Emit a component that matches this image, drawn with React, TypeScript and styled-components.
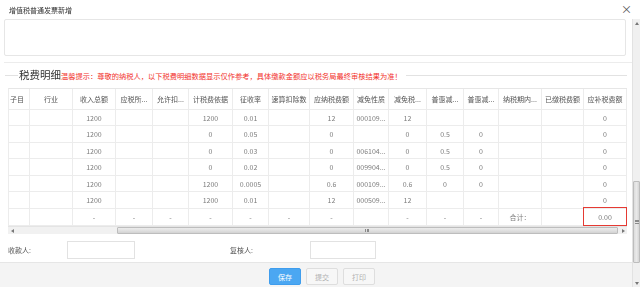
import React from 'react';
import styled, { createGlobalStyle } from 'styled-components';

const Global = createGlobalStyle`
  html, body { margin: 0; padding: 0; background: #fff; }
  body {
    font-family: "Noto Sans CJK SC", "Noto Sans", sans-serif;
    -webkit-font-smoothing: antialiased;
  }
  * { box-sizing: border-box; }
`;

const Window = styled.div`
  width: 640px;
  height: 287px;
  display: flex;
  flex-direction: column;
  overflow: hidden;
  background: #fff;
`;

const TitleBar = styled.div`
  height: 19px;
  flex: none;
  display: flex;
  align-items: center;
  justify-content: space-between;
  padding: 0 8px 0 9px;
`;

const Title = styled.span`
  font-size: 7px;
  color: #333;
  filter: grayscale(1);
`;

const Close = styled.span`
  font-size: 11px;
  line-height: 1;
  color: #555;
`;

const Body = styled.div`
  flex: 1;
  display: flex;
  min-height: 0;
`;

const Content = styled.div`
  flex: 1;
  display: flex;
  flex-direction: column;
  min-width: 0;
`;

const TopBox = styled.div`
  height: 37px;
  margin: 0 6px 0 4px;
  border: 1px solid #e6e6e6;
  border-radius: 2px;
`;

const Divider = styled.div`
  height: 1px;
  margin: 6px 0 0 4px;
  background: #ececec;
`;

const LegendRow = styled.div`
  height: 25px;
  display: flex;
  align-items: center;
  padding: 0 5px;
`;

const LegendLine = styled.div<{ $grow?: boolean }>`
  height: 1px;
  background: #e2e2e2;
  width: 13px;
  flex: ${(p) => (p.$grow ? '1' : 'none')};
  margin: ${(p) => (p.$grow ? '0 0 0 4px' : '0 1px 0 0')};
`;

const Heading = styled.span`
  font-size: 10.5px;
  color: #333;
  line-height: 1;
  filter: grayscale(1);
`;

const Hint = styled.span`
  font-size: 7.25px;
  color: #f2322c;
  line-height: 1;
  margin-top: 2px;
  white-space: nowrap;
`;

const TableWrap = styled.div`
  margin-left: 8px;
  width: 619px;
  position: relative;
`;

const Grid = styled.div<{ $cols: string }>`
  display: grid;
  grid-template-columns: ${(p) => p.$cols};
  grid-template-rows: 21px 16px 17px 16px 17px 16px 17px 17px;
  border-top: 1px solid #e6e6e6;
  border-left: 1px solid #ececec;
`;

const Cell = styled.div<{ $left?: boolean; $mark?: boolean }>`
  position: relative;
  display: flex;
  align-items: center;
  justify-content: ${(p) => (p.$left ? 'flex-start' : 'center')};
  padding: ${(p) => (p.$left ? '0 0 0 1px' : '0 2px')};
  border-right: 1px solid #ececec;
  border-bottom: 1px solid #ececec;
  white-space: nowrap;
  overflow: ${(p) => (p.$mark ? 'visible' : 'hidden')};
  background: #fff;
  &::after {
    content: '';
    display: ${(p) => (p.$mark ? 'block' : 'none')};
    position: absolute;
    left: -1px;
    right: -1px;
    top: -2px;
    bottom: -1px;
    border: 1.5px solid #e53a33;
    z-index: 2;
  }
`;

const CellText = styled.span<{ $head?: boolean }>`
  font-size: 7px;
  color: ${(p) => (p.$head ? '#555' : '#7c7c7c')};
  filter: grayscale(1);
`;

const HScroll = styled.div`
  margin-left: 8px;
  width: 619px;
  height: 8px;
  display: flex;
  background: #f1f1f1;
  border-top: 1px solid #e4e4e4;
`;

const Arrow = styled.div`
  width: 8px;
  flex: none;
  display: flex;
  align-items: center;
  justify-content: center;
`;

const Track = styled.div<{ $vertical?: boolean }>`
  flex: 1;
  display: flex;
  flex-direction: ${(p) => (p.$vertical ? 'column' : 'row')};
`;

const Gap = styled.div<{ $size: number }>`
  flex: ${(p) => p.$size} 1 0;
`;

const Thumb = styled.div<{ $size: number; $vertical?: boolean }>`
  flex: ${(p) => p.$size} 1 0;
  display: flex;
  align-items: center;
  justify-content: center;
  background: ${(p) =>
    p.$vertical
      ? 'linear-gradient(to right, #dcdcdc, #e9e9e9 50%, #d6d6d6)'
      : 'linear-gradient(to bottom, #ececec, #dedede 60%, #d2d2d2)'};
  border: 1px solid #bdbdbd;
  border-radius: 1px;
`;

const Grip = styled.div<{ $vertical?: boolean }>`
  width: 4px;
  height: ${(p) => (p.$vertical ? '4px' : '3px')};
  border-style: solid;
  border-color: #8a8a8a;
  border-width: ${(p) => (p.$vertical ? '1px 0' : '0 1px')};
  position: relative;
  &::before {
    content: '';
    position: absolute;
    background: #8a8a8a;
    ${(p) =>
      p.$vertical
        ? 'left:0; right:0; top:50%; height:1px; margin-top:-0.5px;'
        : 'top:0; bottom:0; left:50%; width:1px; margin-left:-0.5px;'}
  }
`;

const SignRow = styled.div`
  margin-top: 7px;
  height: 18px;
  display: grid;
  grid-template-columns: 59px 68px 95px 80px 66px;
  align-items: center;
  padding-left: 8px;
`;

const Label = styled.span`
  font-size: 7px;
  color: #555;
  filter: grayscale(1);
`;

const Input = styled.div`
  height: 18px;
  border: 1px solid #e2e2e2;
  background: #fff;
`;

const Footer = styled.div`
  margin-top: 3px;
  flex: 1;
  background: #f4f4f4;
  border-top: 1px solid #e6e6e6;
  display: flex;
  align-items: flex-start;
  padding: 5px 0 0 269px;
  gap: 5px;
`;

const Button = styled.button<{ $primary?: boolean }>`
  width: 32px;
  height: 17px;
  padding: 0;
  font-family: inherit;
  font-size: 7px;
  border-radius: 2px;
  border: 1px solid ${(p) => (p.$primary ? '#3f9ded' : '#dedede')};
  background: ${(p) => (p.$primary ? '#4ba7f2' : '#f7f7f7')};
  color: ${(p) => (p.$primary ? '#fff' : '#b0b0b0')};
`;

const VScroll = styled.div`
  width: 8px;
  flex: none;
  display: flex;
  flex-direction: column;
  background: #f0f0f0;
  border-left: 1px solid #e2e2e2;
`;

const VArrow = styled.div`
  height: 8px;
  flex: none;
  display: flex;
  align-items: center;
  justify-content: center;
`;

const Tri = ({ dir }: { dir: 'up' | 'down' | 'left' | 'right' }) => {
  const pts = {
    up: '2,0 4,3 0,3',
    down: '0,0 4,0 2,3',
    left: '3,0 3,4 0,2',
    right: '0,0 3,2 0,4',
  }[dir];
  const w = dir === 'up' || dir === 'down' ? 4 : 3;
  const h = dir === 'up' || dir === 'down' ? 3 : 4;
  return (
    <svg width={w} height={h} viewBox={`0 0 ${w} ${h}`}>
      <polygon points={pts} fill="#777" />
    </svg>
  );
};

const widths = [21, 43, 43, 37, 36, 44, 36, 41, 44, 35, 38, 37, 35, 43, 42, 44];
const headers = [
  '子目', '行业', '收入总额', '应税所...', '允许扣...', '计税费依据', '征收率', '速算扣除数',
  '应纳税费额', '减免性质', '减免税...', '普惠减...', '普惠减...', '纳税期内...', '已缴税费额', '应补税费额',
];
const rows: string[][] = [
  ['', '', '1200', '', '', '1200', '0.01', '', '12', '000109...', '12', '', '', '', '', '0'],
  ['', '', '1200', '', '', '0', '0.05', '', '0', '', '0', '0.5', '0', '', '', '0'],
  ['', '', '1200', '', '', '0', '0.03', '', '0', '006104...', '0', '0.5', '0', '', '', '0'],
  ['', '', '1200', '', '', '0', '0.02', '', '0', '009904...', '0', '0.5', '0', '', '', '0'],
  ['', '', '1200', '', '', '1200', '0.0005', '', '0.6', '000109...', '0.6', '0', '0', '', '', '0'],
  ['', '', '1200', '', '', '1200', '0.01', '', '12', '000509...', '12', '', '', '', '', '0'],
  ['', '', '-', '-', '-', '-', '-', '-', '-', '', '-', '-', '-', '合计：', '', '0.00'],
];

export default function App() {
  const cols = widths.map((w, i) => `${i === widths.length - 1 ? w - 1 : w}px`).join(' ');
  return (
    <>
      <Global />
      <Window>
        <TitleBar>
          <Title>增值税普通发票新增</Title>
          <Close>×</Close>
        </TitleBar>
        <Body>
          <Content>
            <TopBox />
            <Divider />
            <LegendRow>
              <LegendLine />
              <Heading>税费明细</Heading>
              <Hint>温馨提示：尊敬的纳税人，以下税费明细数据显示仅作参考，具体缴款金额应以税务局最终审核结果为准！</Hint>
              <LegendLine $grow />
            </LegendRow>
            <TableWrap>
              <Grid $cols={cols}>
                {headers.map((h, i) => (
                  <Cell key={`h${i}`} $left={i === 0}>
                    <CellText $head>{h}</CellText>
                  </Cell>
                ))}
                {rows.map((r, ri) =>
                  r.map((c, ci) => (
                    <Cell
                      key={`${ri}-${ci}`}
                      $mark={ri === rows.length - 1 && ci === r.length - 1}
                    >
                      <CellText>{c}</CellText>
                    </Cell>
                  ))
                )}
              </Grid>
            </TableWrap>
            <HScroll>
              <Arrow>
                <Tri dir="left" />
              </Arrow>
              <Track>
                <Gap $size={101} />
                <Thumb $size={501}>
                  <Grip />
                </Thumb>
                <Gap $size={1} />
              </Track>
              <Arrow>
                <Tri dir="right" />
              </Arrow>
            </HScroll>
            <SignRow>
              <Label>收款人:</Label>
              <Input />
              <span />
              <Label>复核人:</Label>
              <Input />
            </SignRow>
            <Footer>
              <Button $primary>保存</Button>
              <Button>提交</Button>
              <Button>打印</Button>
            </Footer>
          </Content>
          <VScroll>
            <VArrow>
              <Tri dir="up" />
            </VArrow>
            <Track $vertical>
              <Gap $size={155} />
              <Thumb $size={81} $vertical>
                <Grip $vertical />
              </Thumb>
              <Gap $size={16} />
            </Track>
            <VArrow>
              <Tri dir="down" />
            </VArrow>
          </VScroll>
        </Body>
      </Window>
    </>
  );
}
